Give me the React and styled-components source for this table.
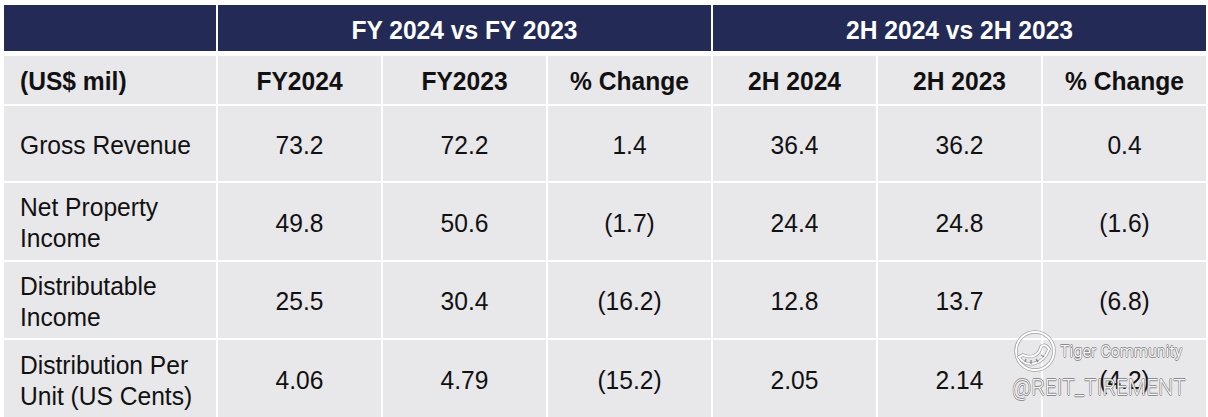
import React from "react";
import styled, { createGlobalStyle } from "styled-components";

const Global = createGlobalStyle`
  html, body { margin: 0; padding: 0; background: #ffffff; }
  body { font-family: "Liberation Sans", Arial, sans-serif; }
`;

const Page = styled.div`
  position: relative;
  width: 1208px;
  height: 417px;
  overflow: hidden;
  padding: 5px 0 0 4px;
  box-sizing: border-box;
  background: #fff;
`;

const Table = styled.div`
  display: grid;
  grid-template-columns: 212px repeat(6, 163px);
  grid-template-rows: 46px 51px 75px 77px 76px 78px;
  gap: 2px;
`;

const GroupHead = styled.div`
  grid-column: ${(p) => p.$span};
  background: #232a56;
  color: #ffffff;
  font-weight: 700;
  font-size: 24.6px;
  display: flex;
  align-items: center;
  justify-content: center;
  padding-top: 3px;
  box-sizing: border-box;
`;

const Cell = styled.div`
  background: #e8e7ea;
  color: #111;
  font-size: 24.6px;
  font-weight: ${(p) => (p.$bold ? 700 : 400)};
  display: flex;
  align-items: center;
  justify-content: ${(p) => (p.$label ? "flex-start" : "center")};
  padding-left: ${(p) => (p.$label ? "16px" : "0")};
  line-height: 29px;
  margin-top: ${(p) => (p.$sub ? "3px" : "0")};
`;

const Text = styled.span`
  display: inline-block;
  transform: scaleY(1.08);
  padding-top: ${(p) => (p.$nudge ? "1px" : "0")};
`;

const Watermark = styled.div`
  position: absolute;
  left: 1010px;
  top: 328px;
  width: 195px;
  height: 80px;
  pointer-events: none;
`;

const outline = `
  0.6px 0 0 rgba(110,110,110,0.75),
  -0.6px 0 0 rgba(110,110,110,0.75),
  0 0.6px 0 rgba(110,110,110,0.75),
  0 -0.6px 0 rgba(110,110,110,0.75)
`;

const WmBrand = styled.div`
  position: absolute;
  left: 50px;
  top: 14px;
  font-family: "Roboto", "Liberation Sans", sans-serif;
  font-size: 16px;
  color: rgba(255, 255, 255, 0.95);
  text-shadow: ${outline};
  white-space: nowrap;
`;

const WmHandle = styled.div`
  position: absolute;
  left: 2px;
  top: 47px;
  font-family: "Roboto", "Liberation Sans", sans-serif;
  font-weight: 300;
  font-size: 21.2px;
  color: rgba(255, 255, 255, 0.95);
  text-shadow: ${outline};
  white-space: nowrap;
`;

const WmLogo = styled.svg`
  position: absolute;
  left: 2px;
  top: 1px;
`;

const rows = [
  { label: "Gross Revenue", v: ["73.2", "72.2", "1.4", "36.4", "36.2", "0.4"] },
  { label: ["Net Property", "Income"], v: ["49.8", "50.6", "(1.7)", "24.4", "24.8", "(1.6)"] },
  { label: ["Distributable", "Income"], v: ["25.5", "30.4", "(16.2)", "12.8", "13.7", "(6.8)"] },
  { label: ["Distribution Per", "Unit (US Cents)"], v: ["4.06", "4.79", "(15.2)", "2.05", "2.14", "(4.2)"] },
];

const subHeads = ["FY2024", "FY2023", "% Change", "2H 2024", "2H 2023", "% Change"];

const logoFace = "M7 28 C13 39, 31 37, 37 20 C35 16, 31 15, 29 18 C27 26, 20 30, 11 26 Z";

export default function App() {
  return (
    <>
      <Global />
      <Page>
        <Table>
          <GroupHead $span="1 / 2" />
          <GroupHead $span="2 / 5"><Text>FY 2024 vs FY 2023</Text></GroupHead>
          <GroupHead $span="5 / 8"><Text>2H 2024 vs 2H 2023</Text></GroupHead>

          <Cell $label $bold $sub><Text>(US$ mil)</Text></Cell>
          {subHeads.map((h, i) => (
            <Cell key={i} $bold $sub><Text>{h}</Text></Cell>
          ))}

          {rows.map((r, ri) => (
            <React.Fragment key={ri}>
              <Cell $label>
                {Array.isArray(r.label) ? (
                  <Text $nudge>
                    {r.label[0]}
                    <br />
                    {r.label[1]}
                  </Text>
                ) : (
                  <Text $nudge>{r.label}</Text>
                )}
              </Cell>
              {r.v.map((v, vi) => (
                <Cell key={vi}><Text $nudge>{v}</Text></Cell>
              ))}
            </React.Fragment>
          ))}
        </Table>

        <Watermark>
          <WmLogo width="46" height="46" viewBox="0 0 46 46" fill="none">
            <circle cx="23" cy="22" r="19" stroke="rgba(110,110,110,0.6)" strokeWidth="3.4" />
            <circle cx="23" cy="22" r="19" stroke="#ffffff" strokeWidth="2" />
            <path d={logoFace} stroke="rgba(110,110,110,0.6)" strokeWidth="3.4" />
            <path d={logoFace} stroke="#ffffff" strokeWidth="2" />
            <path
              d="M14 30 L13 33 M19 31 L19 35 M24 30 L26 33 M29 26 L32 28"
              stroke="rgba(110,110,110,0.7)"
              strokeWidth="1.4"
            />
          </WmLogo>
          <WmBrand>Tiger Community</WmBrand>
          <WmHandle>@REIT_TIREMENT</WmHandle>
        </Watermark>
      </Page>
    </>
  );
}
